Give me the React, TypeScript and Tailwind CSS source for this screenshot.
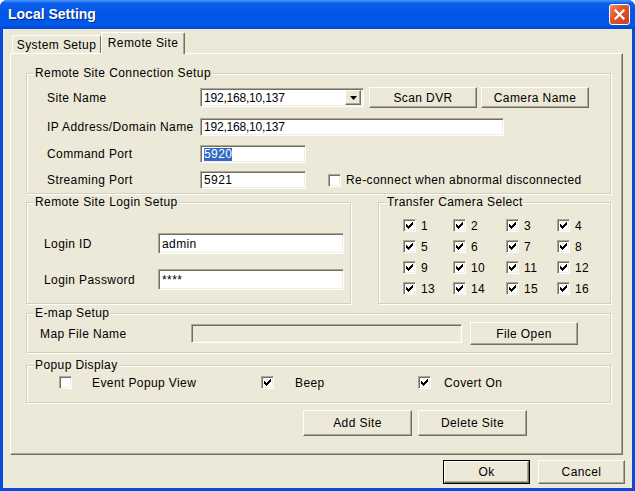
import React from 'react';

// Windows XP style "Local Setting" dialog

function Btn({ children, className = '' }: { children: React.ReactNode; className?: string }) {
  return (
    <div
      className={`flex items-center justify-center bg-[#ECE9D8] border border-t-white border-l-white border-r-[#716F64] border-b-[#716F64] shadow-[inset_-1px_-1px_0_#ACA899] ${className}`}
    >
      {children}
    </div>
  );
}

function Field({
  children,
  className = '',
  disabled = false,
}: {
  children?: React.ReactNode;
  className?: string;
  disabled?: boolean;
}) {
  return (
    <div
      className={`flex items-center pl-[3px] border border-t-[#ACA899] border-l-[#ACA899] border-r-white border-b-white shadow-[inset_1px_1px_0_#716F64,inset_-1px_-1px_0_#F1EFE2] ${
        disabled ? 'bg-[#ECE9D8]' : 'bg-white'
      } ${className}`}
    >
      {children}
    </div>
  );
}

function Check({ on = false }: { on?: boolean }) {
  return (
    <div className="w-[13px] h-[13px] shrink-0 bg-white border border-t-[#ACA899] border-l-[#ACA899] border-r-white border-b-white shadow-[inset_1px_1px_0_#716F64,inset_-1px_-1px_0_#F1EFE2] flex items-center justify-center">
      {on && (
        <svg width="7" height="7" viewBox="0 0 7 7" shapeRendering="crispEdges">
          <path d="M0 2h1v3h-1z M1 3h1v3h-1z M2 4h1v3h-1z M3 3h1v3h-1z M4 2h1v3h-1z M5 1h1v3h-1z M6 0h1v3h-1z" fill="#000" />
        </svg>
      )}
    </div>
  );
}

function Group({
  title,
  className = '',
  children,
}: {
  title: string;
  className?: string;
  children?: React.ReactNode;
}) {
  return (
    <div className={`relative border border-[#D0D0BF] shadow-[1px_1px_0_#fff,inset_1px_1px_0_#fff] ${className}`}>
      <span className="absolute top-[-8px] left-[7px] px-[1px] bg-[#ECE9D8] leading-[14px]">{title}</span>
      {children}
    </div>
  );
}

export default function App() {
  const cams = Array.from({ length: 16 }, (_, i) => i + 1);

  return (
    <div className="w-[635px] h-[491px] flex flex-col rounded-t-[7px] overflow-hidden bg-[#0A49DA] text-[12px] tracking-[0.4px] text-black font-['Liberation_Sans',Arial,sans-serif]">
      {/* title bar */}
      <div className="h-[29px] shrink-0 flex items-center pl-[8px] pr-[5px] bg-[linear-gradient(to_bottom,#4A97FA_0%,#0A5EEC_12%,#0055E6_50%,#0058EA_85%,#0046CF_100%)]">
        <span className="flex-1 text-white font-bold text-[14px] tracking-normal [text-shadow:1px_1px_0_#0A2A7A]">
          Local Setting
        </span>
        <div className="w-[21px] h-[21px] rounded-[3px] border border-white bg-[linear-gradient(135deg,#F08A6A_0%,#E0532C_45%,#C93F1A_100%)] flex items-center justify-center">
          <svg width="11" height="11" viewBox="0 0 11 11">
            <path d="M1.5 1.5L9.5 9.5M9.5 1.5L1.5 9.5" stroke="#fff" strokeWidth="2.2" strokeLinecap="square" />
          </svg>
        </div>
      </div>

      {/* client area */}
      <div className="flex-1 px-[3px] pb-[3px]">
        <div className="h-full bg-[#ECE9D8] flex flex-col">
          {/* tabs */}
          <div className="flex items-end h-[24px] pl-[9px] pt-[4px]">
            <div className="h-[18px] w-[89px] flex items-center justify-center border border-b-0 border-t-white border-l-white border-r-[#716F64] rounded-t-[2px]">
              System Setup
            </div>
            <div className="relative z-10 mb-[-1px] h-[22px] w-[84px] pb-[2px] flex items-center justify-center bg-[#ECE9D8] border border-b-0 border-t-white border-l-white border-r-[#716F64] shadow-[inset_-1px_0_0_#ACA899] rounded-t-[2px]">
              Remote Site
            </div>
          </div>

          {/* tab panel */}
          <div className="ml-[7px] w-[613px] h-[402px] border border-t-white border-l-white border-r-[#716F64] border-b-[#716F64] shadow-[inset_-1px_-1px_0_#ACA899] pl-[15px] flex flex-col">
            {/* Remote Site Connection Setup */}
            <Group title="Remote Site Connection Setup" className="mt-[19px] w-[585px] h-[121px] pl-[20px] pt-[13px]">
              <div className="flex items-center h-[21px]">
                <span className="w-[153px]">Site Name</span>
                <Field className="w-[164px] h-[19px] pr-[2px]">
                  <span className="flex-1 tracking-[-0.2px]">192,168,10,137</span>
                  <Btn className="w-[16px] h-[15px]">
                    <svg width="7" height="4" viewBox="0 0 7 4">
                      <path d="M0 0h7L3.5 4z" fill="#000" />
                    </svg>
                  </Btn>
                </Field>
                <Btn className="ml-[5px] w-[108px] h-[21px]">Scan DVR</Btn>
                <Btn className="ml-[4px] w-[108px] h-[21px]">Camera Name</Btn>
              </div>
              <div className="flex items-center h-[18px] mt-[10px]">
                <span className="w-[153px]">IP Address/Domain Name</span>
                <Field className="w-[304px] h-[18px]">
                  <span className="tracking-[-0.2px]">192,168,10,137</span>
                </Field>
              </div>
              <div className="flex items-center h-[18px] mt-[9px]">
                <span className="w-[153px]">Command Port</span>
                <Field className="w-[106px] h-[18px]">
                  <span className="bg-[#316AC5] text-white leading-[13px]">5920</span>
                </Field>
              </div>
              <div className="flex items-center h-[18px] mt-[8px]">
                <span className="w-[153px]">Streaming Port</span>
                <Field className="w-[106px] h-[18px]">5921</Field>
                <div className="ml-[22px]">
                  <Check />
                </div>
                <span className="ml-[5px]">Re-connect when abnormal disconnected</span>
              </div>
            </Group>

            <div className="flex mt-[8px]">
              {/* Remote Site Login Setup */}
              <Group title="Remote Site Login Setup" className="w-[325px] h-[102px] pl-[17px] pt-[30px]">
                <div className="flex items-center h-[21px]">
                  <span className="w-[114px]">Login ID</span>
                  <Field className="w-[186px] h-[21px]">admin</Field>
                </div>
                <div className="flex items-center h-[21px] mt-[15px]">
                  <span className="w-[114px]">Login Password</span>
                  <Field className="w-[186px] h-[21px]">****</Field>
                </div>
              </Group>

              {/* Transfer Camera Select */}
              <Group title="Transfer Camera Select" className="ml-[27px] w-[233px] h-[102px] pl-[24px] pt-[12px]">
                <div className="grid grid-cols-[50px_53px_51px_40px] auto-rows-[21px]">
                  {cams.map((n) => (
                    <div key={n} className="flex items-center">
                      <Check on />
                      <span className="ml-[5px]">{n}</span>
                    </div>
                  ))}
                </div>
              </Group>
            </div>

            {/* E-map Setup */}
            <Group title="E-map Setup" className="mt-[9px] w-[585px] h-[40px] pl-[13px] pt-[8px]">
              <div className="flex items-center h-[23px]">
                <span className="w-[151px]">Map File Name</span>
                <Field disabled className="w-[271px] h-[19px]" />
                <Btn className="ml-[8px] w-[108px] h-[23px]">File Open</Btn>
              </div>
            </Group>

            {/* Popup Display */}
            <Group title="Popup Display" className="mt-[12px] w-[585px] h-[38px] pl-[32px] pt-[10px]">
              <div className="flex items-center h-[13px]">
                <div className="w-[202px] flex items-center">
                  <Check />
                  <span className="ml-[20px]">Event Popup View</span>
                </div>
                <div className="w-[157px] flex items-center">
                  <Check on />
                  <span className="ml-[21px]">Beep</span>
                </div>
                <div className="flex items-center">
                  <Check on />
                  <span className="ml-[13px]">Covert On</span>
                </div>
              </div>
            </Group>

            <div className="flex mt-[7px] ml-[277px]">
              <Btn className="w-[109px] h-[26px]">Add Site</Btn>
              <Btn className="ml-[6px] w-[109px] h-[26px]">Delete Site</Btn>
            </div>
          </div>

          {/* dialog buttons */}
          <div className="flex justify-end mt-[5px] pr-[7px]">
            <div className="border border-black">
              <Btn className="w-[85px] h-[22px]">Ok</Btn>
            </div>
            <Btn className="ml-[8px] w-[87px] h-[24px]">Cancel</Btn>
          </div>
        </div>
      </div>
    </div>
  );
}
